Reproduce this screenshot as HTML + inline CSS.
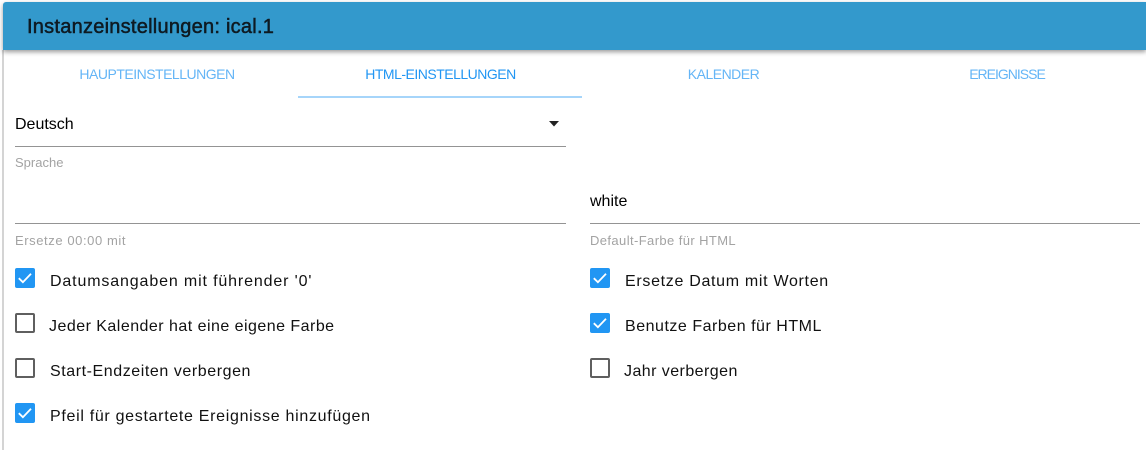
<!DOCTYPE html>
<html lang="de">
<head>
<meta charset="utf-8">
<style>
html,body{margin:0;padding:0;background:#fff}
body{width:1146px;height:450px;position:relative;overflow:hidden;font-family:"Liberation Sans",sans-serif}
.a{position:absolute;white-space:nowrap}
.bar{left:3px;top:2px;width:1143px;height:48px;background:#3399cc;border-radius:3px 0 0 0;box-shadow:0 2px 5px rgba(0,0,0,.4)}
.edge{left:2px;top:50px;width:2px;height:400px;background:#d4d4d4}
.title{left:27px;top:15px;font-size:20px;line-height:24px;color:#0e1a22;-webkit-text-stroke:.5px #0e1a22;letter-spacing:.25px}
.tab{top:66px;font-size:14px;line-height:17px;color:#64b5f6;transform:translateX(-50%);letter-spacing:-.5px}
.sel{color:#2196f3}
.ind{left:298px;top:96px;width:284px;height:2px;background:#a6d5fa}
.v{font-size:16px;line-height:18px;color:#000}
.ln{height:1px;background:#949494}
.lab{font-size:13px;line-height:14px;color:#a3a3a3}
.cb{width:20px;height:20px;box-sizing:border-box;border-radius:2px}
.off{border:2px solid #5f5f5f}
.on{background:#2196f3}
.on svg{display:block}
.t{font-size:16px;line-height:18px;color:#111}
</style>
</head>
<body>
<div class="a edge"></div>
<div class="a bar"></div>
<div class="a title">Instanzeinstellungen: ical.1</div>
<div class="a tab" style="left:157px">HAUPTEINSTELLUNGEN</div>
<div class="a tab sel" style="left:440.5px">HTML-EINSTELLUNGEN</div>
<div class="a tab" style="left:723.5px">KALENDER</div>
<div class="a tab" style="left:1007px;letter-spacing:-1px">EREIGNISSE</div>
<div class="a ind"></div>

<div class="a v" style="left:15px;top:116px">Deutsch</div>
<svg class="a" style="left:549px;top:121px" width="10" height="6" viewBox="0 0 10 6"><path d="M0 0H10L5 5.5Z" fill="#222"/></svg>
<div class="a ln" style="left:15px;top:146px;width:551px"></div>
<div class="a lab" style="left:15px;top:156px">Sprache</div>

<div class="a ln" style="left:15px;top:223px;width:551px"></div>
<div class="a lab" style="left:15px;top:234px;letter-spacing:.58px">Ersetze 00:00 mit</div>

<div class="a v" style="left:590px;top:193px">white</div>
<div class="a ln" style="left:590px;top:223px;width:550px"></div>
<div class="a lab" style="left:590px;top:234px;letter-spacing:.4px">Default-Farbe für HTML</div>

<div class="a cb on" style="left:15px;top:268px"><svg width="20" height="20" viewBox="0 0 20 20"><path d="M3.8 10.2L7.9 14.2L16 5.8" fill="none" stroke="#fff" stroke-width="1.8"/></svg></div>
<div class="a t" style="left:50px;top:273px;letter-spacing:.86px">Datumsangaben mit führender '0'</div>
<div class="a cb off" style="left:15px;top:313px"></div>
<div class="a t" style="left:49px;top:318px;letter-spacing:.47px">Jeder Kalender hat eine eigene Farbe</div>
<div class="a cb off" style="left:15px;top:358px"></div>
<div class="a t" style="left:50px;top:363px;letter-spacing:.57px">Start-Endzeiten verbergen</div>
<div class="a cb on" style="left:15px;top:403px"><svg width="20" height="20" viewBox="0 0 20 20"><path d="M3.8 10.2L7.9 14.2L16 5.8" fill="none" stroke="#fff" stroke-width="1.8"/></svg></div>
<div class="a t" style="left:50px;top:408px;letter-spacing:.69px">Pfeil für gestartete Ereignisse hinzufügen</div>

<div class="a cb on" style="left:590px;top:268px"><svg width="20" height="20" viewBox="0 0 20 20"><path d="M3.8 10.2L7.9 14.2L16 5.8" fill="none" stroke="#fff" stroke-width="1.8"/></svg></div>
<div class="a t" style="left:625px;top:273px;letter-spacing:.69px">Ersetze Datum mit Worten</div>
<div class="a cb on" style="left:590px;top:313px"><svg width="20" height="20" viewBox="0 0 20 20"><path d="M3.8 10.2L7.9 14.2L16 5.8" fill="none" stroke="#fff" stroke-width="1.8"/></svg></div>
<div class="a t" style="left:625px;top:318px;letter-spacing:.52px">Benutze Farben für HTML</div>
<div class="a cb off" style="left:590px;top:358px"></div>
<div class="a t" style="left:624px;top:363px;letter-spacing:.44px">Jahr verbergen</div>
</body>
</html>
